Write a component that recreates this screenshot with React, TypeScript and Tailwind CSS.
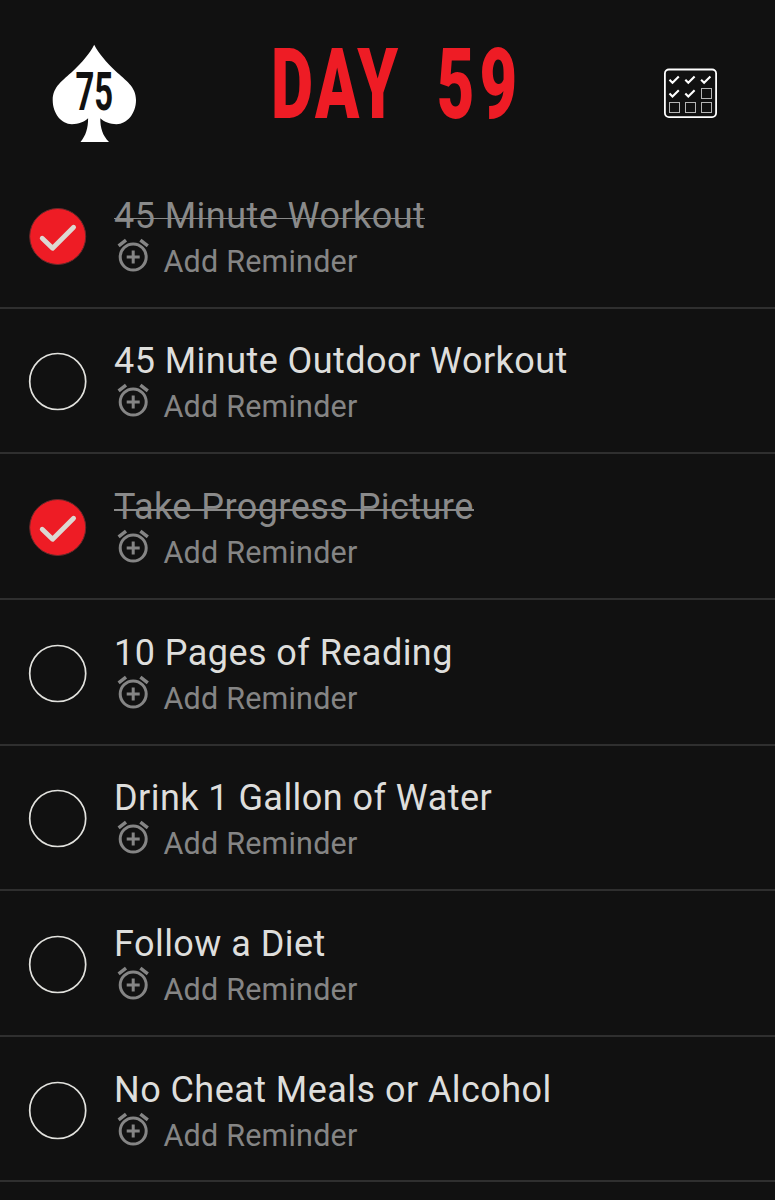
import { clsx } from 'clsx';

interface Task {
  id: number;
  title: string;
  done: boolean;
}

const tasks: Task[] = [
  { id: 1, title: '45 Minute Workout', done: true },
  { id: 2, title: '45 Minute Outdoor Workout', done: false },
  { id: 3, title: 'Take Progress Picture', done: true },
  { id: 4, title: '10 Pages of Reading', done: false },
  { id: 5, title: 'Drink 1 Gallon of Water', done: false },
  { id: 6, title: 'Follow a Diet', done: false },
  { id: 7, title: 'No Cheat Meals or Alcohol', done: false },
];

export default function App() {
  return (
    <div className="h-[1200px] w-[775px] overflow-hidden bg-[#111111] font-['Roboto',sans-serif]">
      <Header day={59} />
      <ul>
        {tasks.map((task) => (
          <TaskRow key={task.id} task={task} />
        ))}
      </ul>
    </div>
  );
}

function Header({ day }: { day: number }) {
  return (
    <header className="flex h-[163.1px] items-start justify-between pl-[52px] pr-[58px]">
      <SpadeLogo />
      <h1 className="-mr-[98px] mt-[34.5px] w-[358px] origin-left scale-x-[0.66] whitespace-nowrap text-[98.5px] font-black leading-[100px] tracking-[4px] text-[#ee1c25] [word-spacing:26px]">
        DAY <span className="tracking-[8px]">{day}</span>
      </h1>
      <button className="mt-[68px]" aria-label="Progress calendar">
        <CalendarIcon />
      </button>
    </header>
  );
}

function TaskRow({ task }: { task: Task }) {
  return (
    <li className="flex h-[145.64px] border-b-2 border-[#2f2f2f] pl-[28px]">
      <div className="mt-[43.7px] w-[86px] shrink-0">
        {task.done ? <CheckedCircle /> : <EmptyCircle />}
      </div>
      <div className="flex flex-col items-start pt-[30.7px]">
        <p
          className={clsx(
            'whitespace-nowrap text-[36px] leading-[44px] tracking-[0.45px]',
            task.done
              ? "relative text-[#8a8a8a] after:absolute after:inset-x-0 after:top-[24px] after:h-[1.5px] after:bg-[#8a8a8a] after:content-['']"
              : 'text-[#dededc]'
          )}
        >
          {task.title}
        </p>
        <button className="flex items-start text-[30.5px] leading-[47px] tracking-[0.2px] text-[#858585]">
          <AlarmIcon />
          <span className="ml-[11.5px] whitespace-nowrap">Add Reminder</span>
        </button>
      </div>
    </li>
  );
}

function EmptyCircle() {
  return (
    <svg className="h-[60px] w-[60px]" viewBox="0 0 60 60" fill="none">
      <circle cx="29.7" cy="29.5" r="28" stroke="#e2e2de" strokeWidth="1.7" />
    </svg>
  );
}

function CheckedCircle() {
  return (
    <svg className="h-[60px] w-[60px]" viewBox="0 0 60 60" fill="none">
      <circle cx="29.7" cy="29.5" r="28" fill="#ee1c25" stroke="#6d2a2b" strokeWidth="1" />
      <path
        d="M14.2 31.2 24.6 41.3 45.6 20.2"
        stroke="#dcd8d2"
        strokeWidth="4.8"
        strokeLinecap="round"
        strokeLinejoin="round"
      />
    </svg>
  );
}

function AlarmIcon() {
  return (
    <svg className="h-[38px] w-[38px]" viewBox="0 0 38 38" fill="none" stroke="#858585">
      <circle cx="19.2" cy="19" r="13" strokeWidth="3" />
      <path d="M19.2 12.5v13M12.7 19h13" strokeWidth="3" />
      <path d="M4.6 7.9 12 2.1M33.8 7.9 26.4 2.1" strokeWidth="3.4" />
    </svg>
  );
}

function SpadeLogo() {
  return (
    <svg className="mt-[44px] h-[100px] w-[85px]" viewBox="0 0 85 100">
      <path
        fill="#ffffff"
        d="M42.2.7C46.5 9 54.5 18.5 63.5 27 73.5 36.3 84 42.5 84 56 84 69.5 75 80.2 64.5 80.2 58 80.2 52 78 48.3 74.3 48.3 84 50.5 91.5 57 98H28.5C34 91.5 36.1 84 36.1 74.3 32.4 78 26.4 80.2 19.9 80.2 9.4 80.2.7 69.5.7 56 .7 42.5 11 36.3 21 27 30 18.5 38 9 42.2.7Z"
      />
      <text
        x="0"
        y="0"
        transform="translate(23.5 65.7) scale(0.62 1)"
        fill="#111111"
        fontFamily="Roboto, sans-serif"
        fontSize="53"
        fontWeight="700"
      >
        75
      </text>
    </svg>
  );
}

function CalendarIcon() {
  return (
    <svg className="h-[51px] w-[53px]" viewBox="0 0 53 51" fill="none">
      <rect x="0.9" y="1.5" width="51.2" height="47.6" rx="4" stroke="#ffffff" strokeWidth="1.8" />
      <g stroke="#ffffff" strokeWidth="2.1">
        <path d="M5.5 11.8 8.5 14.8 14.8 8.5" />
        <path d="M21.3 11.8 24.3 14.8 30.6 8.5" />
        <path d="M37.1 11.8 40.1 14.8 46.4 8.5" />
        <path d="M5.5 25.6 8.5 28.6 14.8 22.3" />
        <path d="M21.3 25.6 24.3 28.6 30.6 22.3" />
      </g>
      <g stroke="#b5b5b5" strokeWidth="1">
        <rect x="37.5" y="20.5" width="10" height="10" />
        <rect x="5.5" y="34.5" width="10" height="10" />
        <rect x="21.5" y="34.5" width="10" height="10" />
        <rect x="37.5" y="34.5" width="10" height="10" />
      </g>
    </svg>
  );
}
